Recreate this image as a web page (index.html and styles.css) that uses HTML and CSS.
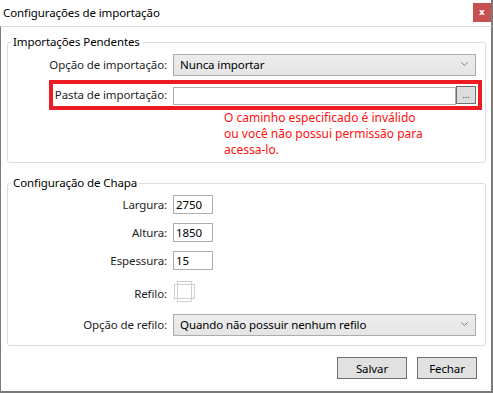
FILE: index.html
```html
<!DOCTYPE html>
<html lang="pt">
<head>
<meta charset="utf-8">
<title>Configurações de importação</title>
<link rel="stylesheet" href="styles.css">
</head>
<body>
<div class="window">
  <div class="titlebar">
    <span class="title">Configurações de importação</span>
    <button class="close" type="button">x</button>
  </div>
  <div class="content">
    <fieldset class="group group-pending">
      <legend>Importações Pendentes</legend>
      <div class="row">
        <label class="lbl">Opção de importação:</label>
        <div class="select">
          <span class="select-text">Nunca importar</span>
          <svg class="chev" width="7" height="4" viewBox="0 0 7 4"><polyline points="0.5,0.5 3.5,3.5 6.5,0.5" fill="none" stroke="#7a7a7a" stroke-width="1"/></svg>
        </div>
      </div>
      <div class="highlight">
        <label class="lbl lbl-hl">Pasta de importação:</label>
        <div class="path-input"></div>
        <button class="browse" type="button">...</button>
      </div>
      <p class="error">O caminho especificado é inválido<br>ou você não possui permissão para<br>acessa-lo.</p>
    </fieldset>

    <fieldset class="group group-sheet">
      <legend>Configuração de Chapa</legend>
      <div class="row row-num">
        <label class="lbl">Largura:</label>
        <div class="num">2750</div>
      </div>
      <div class="row row-num">
        <label class="lbl">Altura:</label>
        <div class="num">1850</div>
      </div>
      <div class="row row-num">
        <label class="lbl">Espessura:</label>
        <div class="num">15</div>
      </div>
      <div class="row row-check">
        <label class="lbl lbl-check">Refilo:</label>
        <svg class="check" width="21" height="21" viewBox="0 0 21 21">
          <rect x="0.5" y="3.5" width="20" height="14" fill="none" stroke="#cfcfcf"/>
          <rect x="3.5" y="0.5" width="14" height="20" fill="none" stroke="#cfcfcf"/>
        </svg>
      </div>
      <div class="row row-trim">
        <label class="lbl">Opção de refilo:</label>
        <div class="select">
          <span class="select-text">Quando não possuir nenhum refilo</span>
          <svg class="chev" width="7" height="4" viewBox="0 0 7 4"><polyline points="0.5,0.5 3.5,3.5 6.5,0.5" fill="none" stroke="#7a7a7a" stroke-width="1"/></svg>
        </div>
      </div>
    </fieldset>

    <div class="actions">
      <button class="btn btn-save" type="button">Salvar</button>
      <button class="btn btn-close" type="button">Fechar</button>
    </div>
  </div>
</div>
</body>
</html>
```
FILE: styles.css
```css
* { box-sizing: border-box; }

html, body {
  margin: 0;
  padding: 0;
  background: #ffffff;
}

body {
  font-family: "Noto Sans", "Open Sans", sans-serif;
  font-size: 11.5px;
  letter-spacing: -0.1px;
  line-height: 16px;
  color: #1e1e1e;
}

.window {
  width: 493px;
  height: 393px;
  display: flex;
  flex-direction: column;
  background: #ffffff;
}

.titlebar {
  height: 26px;
  flex: none;
  display: flex;
  align-items: flex-start;
  border-right: 2px solid #7a7a7a;
}

.title {
  margin: 5px 0 0 3px;
  color: #000000;
}

.close {
  margin: 3px 0 0 auto;
  width: 18px;
  height: 19px;
  border: 0;
  padding: 0;
  background: #c75050;
  color: #ffffff;
  font-family: "DejaVu Sans", sans-serif;
  font-weight: bold;
  font-size: 9px;
  letter-spacing: 0;
  line-height: 17px;
  text-align: center;
}

.content {
  flex: 1;
  border-left: 1px solid #7a7a7a;
  border-right: 2px solid #7a7a7a;
  border-bottom: 2px solid #7a7a7a;
  border-top: 1px solid #dcdcdc;
  padding: 7px 5px 0 6px;
  display: flex;
  flex-direction: column;
}

.group {
  margin: 0;
  border: 1px solid #d5dfe5;
  border-radius: 3px;
  padding: 4px 9px 4px 0;
  min-width: 0;
}

.group legend {
  margin-left: 3px;
  padding: 0 2px;
  color: #000000;
  line-height: 16px;
}

.group-sheet {
  margin-top: 12px;
  padding-bottom: 9px;
}

.row {
  display: flex;
  align-items: center;
}

.lbl {
  width: 159px;
  flex: none;
  margin-right: 6px;
  text-align: right;
  white-space: nowrap;
}

.select {
  flex: 1;
  height: 22px;
  border: 1px solid #acacac;
  background: linear-gradient(#ececec, #e5e5e5);
  display: flex;
  align-items: center;
  padding: 0 7px 0 6px;
}

.select-text {
  flex: 1;
  color: #000000;
}

.chev {
  display: block;
  margin-top: -2px;
}

.highlight {
  margin: 4px -6px 0 41px;
  height: 30px;
  border: 4px solid #ec1c24;
  display: flex;
  align-items: center;
  padding-right: 2px;
}

.lbl-hl {
  width: 114px;
}

.path-input {
  flex: 1;
  height: 18px;
  margin-top: 1px;
  border: 1px solid #abadb3;
  background: #ffffff;
}

.browse {
  width: 20px;
  height: 18px;
  padding: 0;
  border: 1px solid #707070;
  background: #dddddd;
  font-family: "Noto Sans", sans-serif;
  font-size: 9px;
  letter-spacing: 0;
  line-height: 14px;
  color: #333333;
}

.error {
  margin: 0 0 0 216px;
  color: #ff1010;
  font-size: 12px;
  letter-spacing: 0;
  line-height: 16px;
}

.row-num + .row-num {
  margin-top: 9px;
}

.num {
  width: 40px;
  height: 19px;
  border: 1px solid #abadb3;
  padding-left: 2px;
  line-height: 17px;
  color: #000000;
}

.row-check {
  margin-top: 11px;
}

.lbl-check {
  padding-top: 4px;
}

.check {
  display: block;
  margin-left: 1px;
}

.row-trim {
  margin-top: 12px;
}

.actions {
  margin-top: 11px;
  display: flex;
  justify-content: flex-end;
  gap: 10px;
  padding-right: 9px;
}

.btn {
  height: 22px;
  border: 1px solid #707070;
  background: #e1e1e1;
  color: #000000;
  font-family: "Noto Sans", "Open Sans", sans-serif;
  font-size: 11.5px;
  letter-spacing: -0.1px;
  padding: 0;
}

.btn-save { width: 70px; }
.btn-close { width: 60px; }
```
